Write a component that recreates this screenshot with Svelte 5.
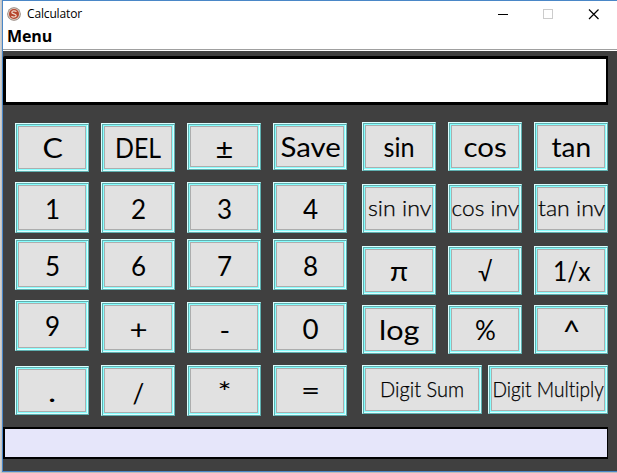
<script>
  // Each key: label, space above, height, label width, label baseline from key top,
  // optional font size
  const padColumns = [
    [
      { t: 'C', gap: 0, h: 49, w: 20, b: 34 },
      { t: '1', gap: 10, h: 51, w: 15, b: 36 },
      { t: '5', gap: 6, h: 51, w: 15, b: 36 },
      { t: '9', gap: 10, h: 51, w: 15, b: 35 },
      { t: '.', gap: 15, h: 49, w: 8, b: 35 }
    ],
    [
      { t: 'DEL', gap: 0, h: 49, w: 46, b: 34 },
      { t: '2', gap: 10, h: 51, w: 15, b: 36 },
      { t: '6', gap: 6, h: 51, w: 15, b: 36 },
      { t: '+', gap: 12, h: 51, w: 18, b: 36 },
      { t: '/', gap: 12, h: 51, w: 12, b: 37 }
    ],
    [
      { t: '±', gap: 0, h: 47, w: 18, b: 34, s: 29 },
      { t: '3', gap: 12, h: 51, w: 15, b: 36 },
      { t: '7', gap: 6, h: 51, w: 15, b: 36 },
      { t: '-', gap: 12, h: 51, w: 11, b: 37 },
      { t: '*', gap: 12, h: 51, w: 14, b: 36 }
    ],
    [
      { t: 'Save', gap: 0, h: 47, w: 60, b: 33 },
      { t: '4', gap: 12, h: 51, w: 15, b: 36 },
      { t: '8', gap: 6, h: 51, w: 15, b: 36 },
      { t: '0', gap: 12, h: 51, w: 16, b: 36 },
      { t: '=', gap: 12, h: 51, w: 19, b: 34 }
    ]
  ];

  const functionRows = [
    { gap: 0, keys: [{ t: 'sin', w: 31, b: 34 }, { t: 'cos', w: 43, b: 34 }, { t: 'tan', w: 40, b: 34 }] },
    { gap: 13, small: true, keys: [{ t: 'sin inv', w: 63, b: 33 }, { t: 'cos inv', w: 68, b: 33 }, { t: 'tan inv', w: 67, b: 33 }] },
    { gap: 13, keys: [{ t: 'π', w: 18, b: 34 }, { t: '√', w: 14, b: 34 }, { t: '1/x', w: 38, b: 34 }] },
    { gap: 10, keys: [{ t: 'log', w: 40, b: 34 }, { t: '%', w: 21, b: 34 }, { t: '^', w: 18, b: 35, s: 31 }] },
    { gap: 11, small: true, wide: true, keys: [{ t: 'Digit Sum', w: 84, b: 33 }, { t: 'Digit Multiply', w: 111, b: 33 }] }
  ];

  // Stretch a label horizontally to its intended width
  function fit(node, width) {
    node.style.transform = `scaleX(${width / node.offsetWidth})`;
  }
</script>

{#snippet key(k, h, small, wide)}
  <button class="key" class:small class:wide style="height:{h}px">
    <span class="face"><span class="label" style="margin-top:{k.b - 30}px;{k.s ? `font-size:${k.s}px` : ''}" use:fit={k.w}>{k.t}</span></span>
  </button>
{/snippet}

<div class="desktop">
  <div class="window">
    <header class="title">
      <svg class="logo" width="14" height="14" viewBox="0 0 14 14">
        <circle cx="7" cy="7" r="6.8" fill="#8f8078" />
        <circle cx="7" cy="7" r="6.1" fill="#d9c8bd" />
        <circle cx="7" cy="7" r="5" fill="#b5452c" />
        <path d="M9.5 4.6C7.8 3.2 4.7 3.7 4.8 5.4 4.9 7.2 9.2 6.5 9.2 8.5 9.2 10.3 6 10.5 4.4 9.2" fill="none" stroke="#f0dccf" stroke-width="1.2" />
      </svg>
      <span class="name">Calculator</span>
      <svg class="controls" width="103" height="12" viewBox="0 0 103 12">
        <path d="M0 6.5H10" stroke="#000" />
        <rect x="45.5" y="1.5" width="9" height="9" fill="none" stroke="#ccc" />
        <path d="M91 1.5L100.5 11M100.5 1.5L91 11" stroke="#000" stroke-width="1.2" />
      </svg>
    </header>
    <nav><span class="menu">Menu</span></nav>
    <main>
      <div class="display"></div>
      <div class="keys">
        <div class="pad">
          {#each padColumns as column}
            <div class="column">
              {#each column as k}
                <div style="margin-top:{k.gap}px">{@render key(k, k.h, false, false)}</div>
              {/each}
            </div>
          {/each}
        </div>
        <div class="functions">
          {#each functionRows as row}
            <div class="row" class:pair={row.wide} style="margin-top:{row.gap}px">
              {#each row.keys as k}
                {@render key(k, 49, row.small, row.wide)}
              {/each}
            </div>
          {/each}
        </div>
      </div>
      <div class="status"></div>
    </main>
  </div>
</div>

<style>
  .desktop {
    box-sizing: border-box;
    width: 617px;
    height: 473px;
    padding: 0 0 1px 2px;
    overflow: hidden;
    background: linear-gradient(90deg, #dadada, #bdbdbd 2px);
  }
  .window {
    box-sizing: border-box;
    height: 472px;
    border: solid #4a87c7;
    border-width: 1px 0 1px 1px;
    background: #404040;
    display: flex;
    flex-direction: column;
  }
  .title {
    height: 25px;
    background: #fff;
    display: flex;
    align-items: center;
    padding-left: 4px;
  }
  .logo { flex: none; }
  .name {
    margin-left: 6px;
    font: 12px/16px "Open Sans", "Noto Sans", sans-serif;
    letter-spacing: -0.15px;
    color: #000;
    flex: 1;
  }
  .controls { flex: none; margin-right: 16px; }
  nav {
    box-sizing: border-box;
    height: 25px;
    background: #fff;
    padding: 0 0 0 4px;
    box-shadow: inset 0 -1px #fff, inset 0 -2px #a0a0a0;
  }
  .menu {
    display: block;
    font: bold 16px/20px "Open Sans", "Noto Sans", sans-serif;
    letter-spacing: -0.1px;
    color: #000;
  }
  main { flex: 1; }
  .display {
    box-sizing: border-box;
    width: 605px;
    height: 49px;
    margin-top: 5px;
    background: #fff;
    border: 3px solid #000;
    border-right-width: 2px;
    border-top-left-radius: 2px;
  }
  .keys {
    display: flex;
    gap: 15px;
    padding: 17px 0 0 12px;
    height: 305px;
  }
  .pad { display: flex; gap: 12px; padding-top: 1px; }
  .row { display: flex; gap: 12px; }
  .pair { gap: 6px; }
  .key {
    display: block;
    box-sizing: border-box;
    width: 74px;
    margin: 0;
    border: 1px solid;
    border-color: #dcffff #5fb0b0 #5fb0b0 #dcffff;
    background: #8ff;
    box-shadow: inset 1px 1px #5fb0b0, inset -1px -1px #dcffff;
    padding: 2px;
    color: #000;
    font: 26px/34px Lato, "Open Sans", sans-serif;
    font-variant-ligatures: none;
  }
  .wide { width: 120px; }
  .face {
    box-sizing: border-box;
    display: flex;
    justify-content: center;
    align-items: flex-start;
    width: 100%;
    height: 100%;
    padding-left: 1px;
    background: #e1e1e1;
    border: 1px solid #adadad;
  }
  .label { flex: none; white-space: nowrap; display: block; }
  .small .label { font-size: 21px; font-weight: 300; -webkit-text-stroke: 0.25px #000; }
  .status {
    box-sizing: border-box;
    width: 605px;
    height: 32px;
    background: #e6e6fa;
    border: 2px solid #000;
    border-right-width: 1px;
  }
</style>
